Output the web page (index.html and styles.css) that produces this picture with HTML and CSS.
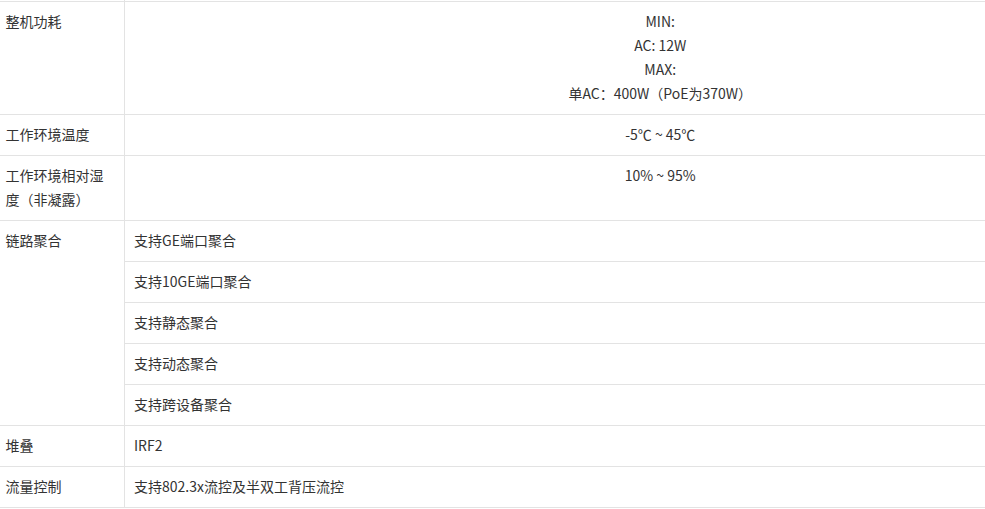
FILE: index.html
```html
<!DOCTYPE html>
<html lang="zh-CN">
<head>
<meta charset="utf-8">
<title>规格</title>
<link rel="stylesheet" href="styles.css">
</head>
<body>
<div class="viewport">
<table class="spec">
  <colgroup><col class="c-name"><col class="c-val"></colgroup>
  <tbody>
    <tr class="prev"><td></td><td></td></tr>
    <tr>
      <td class="name">整机功耗</td>
      <td class="val center">MIN:<br>AC: 12W<br>MAX:<br>单AC：400W（PoE为370W）</td>
    </tr>
    <tr>
      <td class="name">工作环境温度</td>
      <td class="val center">-5℃ ~ 45℃</td>
    </tr>
    <tr>
      <td class="name">工作环境相对湿度（非凝露）</td>
      <td class="val center">10% ~ 95%</td>
    </tr>
    <tr>
      <td class="name" rowspan="5">链路聚合</td>
      <td class="val">支持GE端口聚合</td>
    </tr>
    <tr><td class="val">支持10GE端口聚合</td></tr>
    <tr><td class="val">支持静态聚合</td></tr>
    <tr><td class="val">支持动态聚合</td></tr>
    <tr><td class="val">支持跨设备聚合</td></tr>
    <tr>
      <td class="name">堆叠</td>
      <td class="val">IRF2</td>
    </tr>
    <tr>
      <td class="name">流量控制</td>
      <td class="val">支持802.3x流控及半双工背压流控</td>
    </tr>
  </tbody>
</table>
</div>
</body>
</html>
```
FILE: styles.css
```css
html, body {
  margin: 0;
  padding: 0;
  background: #ffffff;
}
.viewport {
  width: 985px;
  height: 509px;
  overflow: hidden;
}
.spec {
  border-collapse: collapse;
  table-layout: fixed;
  width: 1196px;
  margin-left: -2px;
  font-family: "Noto Sans CJK SC", "Noto Sans", sans-serif;
  font-size: 14px;
  line-height: 24px;
  color: #333333;
}
.c-name { width: 126px; }
.spec td {
  border: 1px solid #e3e3e3;
  padding: 7px 7px 9px;
  vertical-align: top;
  word-break: break-all;
}
.spec td.name {
  border-left: none;
  padding-right: 14px;
}
.spec td.val {
  border-right: none;
  padding-left: 9px;
}
.spec td.center {
  text-align: center;
}
.spec tr.prev td {
  border-top: none;
  padding: 0;
  height: 1px;
  line-height: 0;
  font-size: 0;
}
```
